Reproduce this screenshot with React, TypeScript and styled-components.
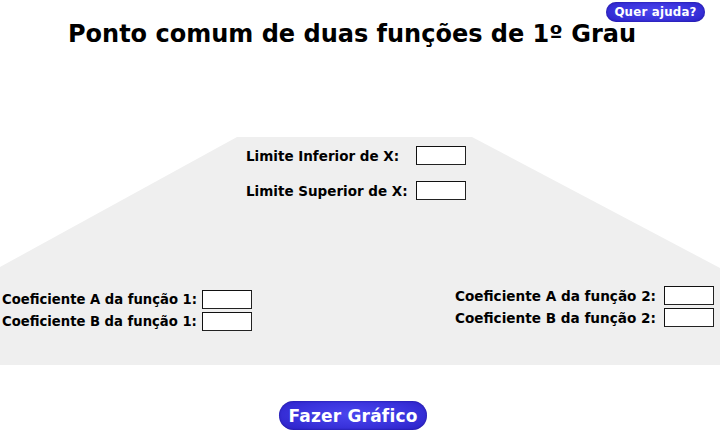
import React from "react";
import styled, { createGlobalStyle } from "styled-components";

const Global = createGlobalStyle`
  html, body { margin: 0; padding: 0; background: #ffffff; }
  body { font-family: "DejaVu Sans", Verdana, sans-serif; }
`;

const Page = styled.div`
  width: 722px;
  height: 434px;
  display: flex;
  flex-direction: column;
  overflow: hidden;
`;

const TopBar = styled.div`
  height: 24px;
  display: flex;
  justify-content: flex-end;
  align-items: flex-start;
  padding: 2px 17px 0 0;
  box-sizing: border-box;
`;

const PillButton = styled.button<{ $size: "small" | "large" }>`
  border: none;
  color: #ffffff;
  font-family: "DejaVu Sans", Verdana, sans-serif;
  font-weight: bold;
  cursor: pointer;
  border-radius: 999px;
  background: radial-gradient(ellipse at 50% 45%, #4a46ee 0%, #3a33dc 55%, #2a1fc4 100%);
  box-shadow: inset 0 0 2px rgba(20, 10, 120, 0.8);
  padding: 0;
  letter-spacing: 0.2px;
  width: ${(p) => (p.$size === "small" ? "99px" : "148px")};
  height: ${(p) => (p.$size === "small" ? "20px" : "29px")};
  font-size: ${(p) => (p.$size === "small" ? "11.8px" : "17px")};
`;

const Title = styled.h1`
  margin: 0;
  padding-right: 18px;
  text-align: center;
  font-size: 24px;
  font-weight: bold;
  color: #000000;
  line-height: 20px;
`;

const Panel = styled.div`
  margin-top: 93px;
  width: 720px;
  height: 228px;
  background: #efefef;
  clip-path: polygon(237px 0, 472px 0, 720px 131px, 720px 228px, 0 228px, 0 130px);
  display: flex;
  flex-direction: column;
  box-sizing: border-box;
  padding-top: 9px;
`;

const LimitsBlock = styled.div`
  display: grid;
  grid-template-columns: 170px 50px;
  row-gap: 16px;
  padding-left: 246px;
  align-items: center;
`;

const Label = styled.label<{ $size?: number }>`
  font-size: ${(p) => p.$size ?? 13.5}px;
  font-weight: bold;
  color: #000000;
  white-space: nowrap;
`;

const Box = styled.input`
  width: 50px;
  height: 19px;
  box-sizing: border-box;
  border: 1px solid #222222;
  border-top-color: #111111;
  border-left-color: #111111;
  background: #ffffff;
  margin: 0;
  padding: 0 2px;
  font-size: 12px;
`;

const CoefRow = styled.div`
  margin-top: 86px;
  display: flex;
  justify-content: space-between;
  align-items: flex-start;
  padding: 0 6px 0 2px;
`;

const CoefGroup = styled.div<{ $labelWidth: number; $offset: number }>`
  display: grid;
  grid-template-columns: ${(p) => p.$labelWidth}px 50px;
  row-gap: 3px;
  align-items: center;
  margin-top: ${(p) => p.$offset}px;
`;

const Footer = styled.div`
  display: flex;
  justify-content: flex-start;
  padding: 36px 0 0 279px;
`;

export default function App() {
  return (
    <Page>
      <Global />
      <TopBar>
        <PillButton $size="small">Quer ajuda?</PillButton>
      </TopBar>
      <Title>Ponto comum de duas funções de 1º Grau</Title>
      <Panel>
        <LimitsBlock>
          <Label>Limite Inferior de X:</Label>
          <Box />
          <Label>Limite Superior de X:</Label>
          <Box />
        </LimitsBlock>
        <CoefRow>
          <CoefGroup $labelWidth={200} $offset={4}>
            <Label $size={13.2}>Coeficiente A da função 1:</Label>
            <Box />
            <Label $size={13.2}>Coeficiente B da função 1:</Label>
            <Box />
          </CoefGroup>
          <CoefGroup $labelWidth={209} $offset={0}>
            <Label $size={13.6}>Coeficiente A da função 2:</Label>
            <Box />
            <Label $size={13.6}>Coeficiente B da função 2:</Label>
            <Box />
          </CoefGroup>
        </CoefRow>
      </Panel>
      <Footer>
        <PillButton $size="large">Fazer Gráfico</PillButton>
      </Footer>
    </Page>
  );
}
